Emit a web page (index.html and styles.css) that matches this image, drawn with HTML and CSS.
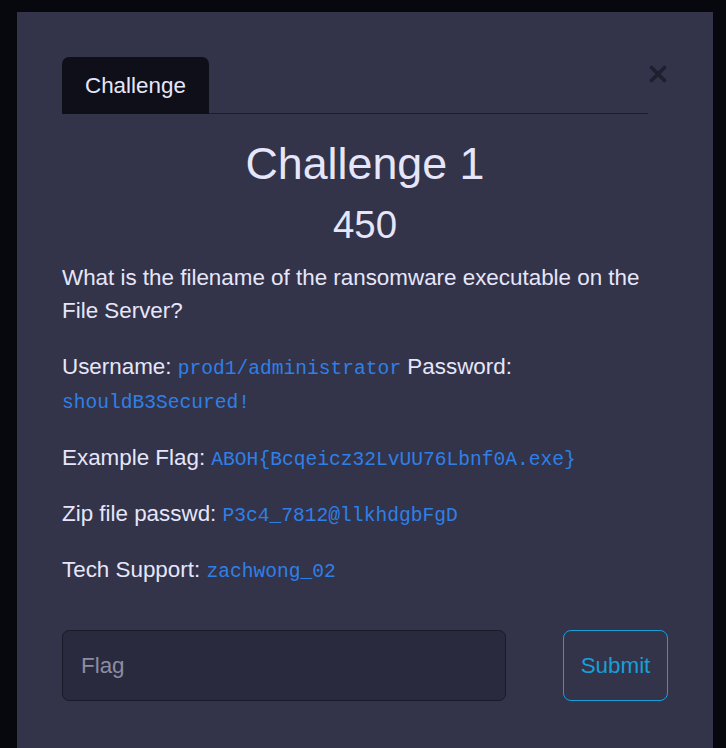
FILE: index.html
```html
<!DOCTYPE html>
<html lang="en">
<head>
<meta charset="utf-8">
<title>Challenge 1</title>
<link rel="stylesheet" href="styles.css">
</head>
<body>
<div class="modal">
  <div class="modal-header">
    <div class="tabs">
      <span class="tab">Challenge</span>
    </div>
    <button class="close" aria-label="Close">
      <svg width="18" height="18" viewBox="0 0 18 18"><path d="M2.5 2.5 L15.5 15.5 M15.5 2.5 L2.5 15.5" stroke="#1f1f2e" stroke-width="3.6" stroke-linecap="round" fill="none"/></svg>
    </button>
  </div>
  <h2 class="title">Challenge 1</h2>
  <h3 class="value">450</h3>
  <div class="desc">
    <p>What is the filename of the ransomware executable on the File Server?</p>
    <p>Username: <code>prod1/administrator</code> Password: <code>shouldB3Secured!</code></p>
    <p>Example Flag: <code>ABOH{Bcqeicz32LvUU76Lbnf0A.exe}</code></p>
    <p>Zip file passwd: <code>P3c4_7812@llkhdgbFgD</code></p>
    <p>Tech Support: <code>zachwong_02</code></p>
  </div>
  <form class="answer" onsubmit="return false">
    <input class="flag" type="text" placeholder="Flag">
    <button class="submit" type="submit">Submit</button>
  </form>
</div>
</body>
</html>
```

FILE: styles.css
```css
html, body {
  margin: 0;
  padding: 0;
  height: 100%;
  overflow: hidden;
  background: #07080d;
}
body {
  font-family: "Liberation Sans", Arial, sans-serif;
  color: #e6e6fa;
  font-size: 22.4px;
  line-height: 1.5;
}
.modal {
  box-sizing: border-box;
  width: 696px;
  min-height: 800px;
  margin: 12px 0 0 17px;
  padding: 45px 45px;
  background: #33334a;
}
.modal-header {
  display: flex;
  align-items: flex-start;
}
.tabs {
  flex: 1;
  display: flex;
  border-bottom: 1px solid #1b1b2b;
}
.tab {
  display: block;
  padding: 12px 23px 11px;
  margin-bottom: -1px;
  background: #0e0f18;
  border-radius: 7px 7px 0 0;
  line-height: 34px;
  color: #e6e6fa;
}
.close {
  display: flex;
  background: none;
  border: 0;
  padding: 0;
  margin: 8px 0 0 1px;
  width: 19px;
  cursor: pointer;
}
.title {
  margin: 23px 0 0;
  font-size: 44.8px;
  font-weight: 400;
  line-height: 1.2;
  text-align: center;
}
.value {
  margin: 11px 0 0;
  font-size: 38.4px;
  font-weight: 400;
  line-height: 1.2;
  text-align: center;
}
.desc {
  margin-top: 13px;
}
.desc p {
  margin: 0 0 21.9px;
}
.desc p:last-child {
  margin-bottom: 0;
}
code {
  font-family: "Liberation Mono", "Courier New", monospace;
  font-size: 19.6px;
  color: #2f80e6;
}
.answer {
  display: flex;
  align-items: stretch;
  margin-top: 42.5px;
}
.flag {
  box-sizing: border-box;
  width: 444px;
  height: 71px;
  padding: 0 18px;
  background: #2a2a3e;
  border: 1px solid #1a1a28;
  border-radius: 7px;
  font-family: "Liberation Sans", Arial, sans-serif;
  font-size: 22.4px;
  color: #e6e6fa;
  outline: none;
}
.flag::placeholder {
  color: #8d8da2;
}
.submit {
  box-sizing: border-box;
  margin-left: auto;
  width: 105px;
  height: 71px;
  padding: 0;
  background: transparent;
  border: 1px solid #189fd8;
  border-radius: 8px;
  color: #189fd8;
  font-family: "Liberation Sans", Arial, sans-serif;
  font-size: 22.4px;
  cursor: pointer;
}
```
